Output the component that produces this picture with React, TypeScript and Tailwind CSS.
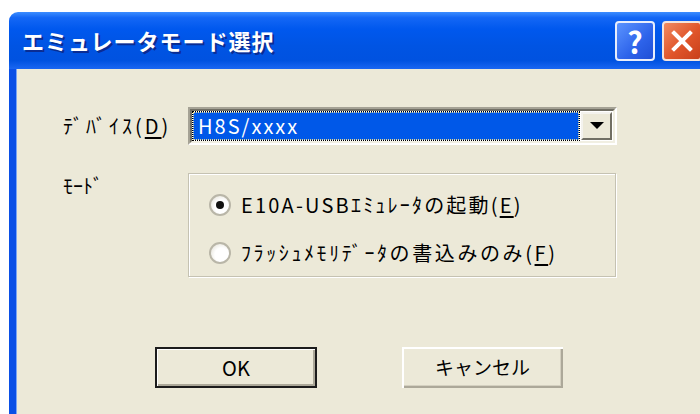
import React from "react";

const Radio = ({ checked }: { checked?: boolean }) => (
  <span className="flex h-[22px] w-[22px] shrink-0 items-center justify-center rounded-full border-2 border-[#b9b6a8] bg-[radial-gradient(circle_at_60%_60%,#ffffff_45%,#dcd9cc_100%)]">
    {checked && <span className="h-[8px] w-[8px] rounded-full bg-[#111]" />}
  </span>
);

const Key = ({ k }: { k: string }) => <span className="underline underline-offset-[3px]">{k}</span>;

export default function App() {
  return (
    <div className="h-[414px] w-[700px] overflow-hidden bg-white pl-[9px] pt-[12px] font-['Noto_Sans_CJK_JP',sans-serif] text-black">
      <div className="flex h-[402px] w-[730px] flex-col overflow-hidden rounded-tl-[9px]">
        {/* title bar */}
        <div className="flex h-[57px] shrink-0 items-center bg-[linear-gradient(180deg,#3c8dff_0%,#1467f5_10%,#0058ee_30%,#0054e3_60%,#0052e0_85%,#1a66f2_100%)] pl-[13px]">
          <span className="text-[22px] font-bold tracking-[1px] text-white [text-shadow:2px_2px_0_#0a2c93]">
            エミュレータモード選択
          </span>
          <div className="ml-auto flex items-center gap-[7px] pr-[37px] pt-[1px]">
            <div className="flex h-[40px] w-[40px] items-center justify-center rounded-[4px] border-2 border-[#e8eefc] bg-[linear-gradient(135deg,#5b94ff,#2d63ea_60%,#1f4fd6)] text-[30px] font-bold leading-none text-white">
              ?
            </div>
            <div className="flex h-[40px] w-[40px] items-center justify-center rounded-[4px] border-2 border-[#f4e4dc] bg-[linear-gradient(135deg,#f08a62,#e0552a_55%,#c8401c)]">
              <svg width="24" height="24" viewBox="0 0 24 24">
                <path d="M4 4 L20 20 M20 4 L4 20" stroke="white" strokeWidth="4" strokeLinecap="square" />
              </svg>
            </div>
          </div>
        </div>

        {/* dialog body */}
        <div className="flex flex-1 border-l-[7px] border-l-[#0a4fe6] bg-[#ece9d8] shadow-[inset_1px_0_0_#7aa5f5]">
          <div className="flex flex-col pl-[47px] pt-[38px] text-[20px]">
            <div className="flex items-center">
              <span className="w-[125px] tracking-[3px]">
                ﾃﾞﾊﾞｲｽ(<Key k="D" />)
              </span>
              <div className="flex h-[38px] w-[429px] border-2 border-b-white border-l-[#a5a295] border-r-white border-t-[#a5a295]">
                <div className="flex flex-1 border-2 border-b-[#f1efe2] border-l-[#716f64] border-r-[#f1efe2] border-t-[#716f64] bg-white p-[1px]">
                  <div className="flex flex-1 items-center border border-dotted border-[#e8d890] bg-[#0058e8] pl-[4px] leading-none tracking-[2px] text-white outline-1 outline-dotted outline-black">
                    H8S/xxxx
                  </div>
                  <div className="ml-[2px] flex w-[31px] items-center justify-center border-2 border-b-[#716f64] border-l-[#f4f3ee] border-r-[#716f64] border-t-[#f4f3ee] bg-[#ece9d8]">
                    <svg width="14" height="8" viewBox="0 0 14 8">
                      <path d="M0 0 H14 L7 7 Z" fill="black" />
                    </svg>
                  </div>
                </div>
              </div>
            </div>

            <div className="mt-[28px] flex items-start">
              <span className="w-[125px] pt-[1px] leading-[24px]">ﾓｰﾄﾞ</span>
              <div className="flex h-[104px] w-[428px] flex-col gap-[26px] border border-[#c5c2b2] pl-[20px] pt-[20px] shadow-[inset_1px_1px_0_#ffffff,1px_1px_0_#ffffff]">
                <div className="flex items-center gap-[10px] leading-none">
                  <Radio checked />
                  <span className="tracking-[2.2px]">
                    E10A-USBｴﾐｭﾚｰﾀの起動(<Key k="E" />)
                  </span>
                </div>
                <div className="flex items-center gap-[10px] leading-none">
                  <Radio />
                  <span className="tracking-[2.6px]">
                    ﾌﾗｯｼｭﾒﾓﾘﾃﾞｰﾀの書込みのみ(<Key k="F" />)
                  </span>
                </div>
              </div>
            </div>

            <div className="ml-[92px] mt-[70px] flex gap-[85px]">
              <div className="flex h-[41px] w-[162px] items-center justify-center border-2 border-[#1c1c1c] bg-[#ece9d8] shadow-[inset_1px_1px_0_#ffffff,inset_-2px_-2px_0_#aca899]">
                OK
              </div>
              <div className="flex h-[41px] w-[161px] items-center justify-center bg-[#ece9d8] text-[19px] shadow-[inset_2px_2px_0_#ffffff,inset_-2px_-2px_0_#aca899,inset_-3px_-3px_0_#d4d0c0]">
                キャンセル
              </div>
            </div>
          </div>
        </div>
      </div>
    </div>
  );
}
